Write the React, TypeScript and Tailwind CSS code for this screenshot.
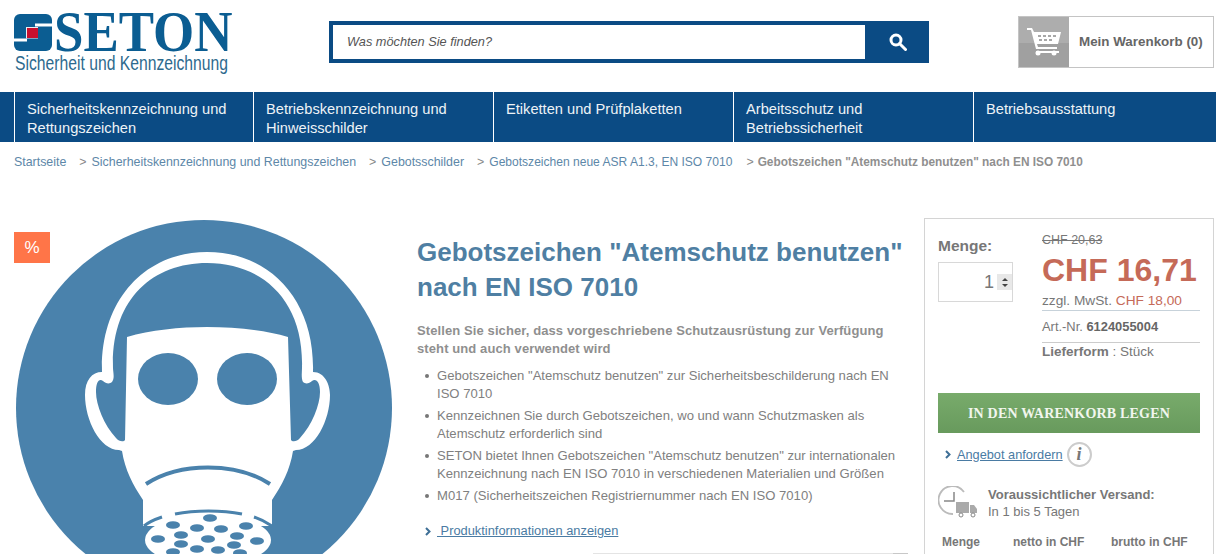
const Arial = "font-['Liberation_Sans',Arial,sans-serif]";

function Mask() {
  const c = "#4a82ac";
  const dots = [
    [210, 518], [173, 525], [197, 528], [221, 529], [246, 526], [181, 535], [237, 536],
    [158, 539], [208, 539], [257, 541], [181, 544], [234, 545], [173, 552], [197, 549], [218, 550], [240, 553],
  ];
  return (
    <svg width="380" height="340" viewBox="14 214 380 340" className="block">
      <circle cx="204" cy="408" r="188" fill={c} />
      <path
        d="M102 372 C100 300 145 252 207 252 C270 252 315 300 313 372 C325 372 330 385 330 395 C330 420 315 450 296 450 L293 451 C290 470 282 485 272 500 L272 526 L143 526 L143 500 C133 485 125 470 122 451 L119 450 C100 450 85 420 85 395 C85 380 92 372 102 372 Z"
        fill="#fff"
      />
      <path
        d="M127 337 C150 330 180 327 207 327 C235 327 265 330 288 337 L291 440 C292 442 297 442 300 438 C312 425 320 405 320 392 C320 382 316 378 312 381 C309 384 305 384 303 382 C301 378 302 372 302 368 C304 300 262 263 207 263 C152 263 111 300 113 368 C113 372 115 378 112 382 C110 384 106 384 103 381 C99 378 96 382 96 392 C96 405 104 425 116 438 C119 442 124 442 125 440 Z"
        fill={c}
      />
      <ellipse cx="168" cy="379" rx="30" ry="26" fill={c} />
      <ellipse cx="247" cy="379" rx="30" ry="26" fill={c} />
      <path d="M146 484 C180 462 236 462 270 484" fill="none" stroke={c} strokeWidth="4" />
      <ellipse cx="208" cy="540" rx="63" ry="26" fill="#fff" />
      <path d="M175 514 C195 510 222 510 242 514" fill="none" stroke={c} strokeWidth="3" />
      <path d="M144 526 C150 521 156 519 162 517 M254 517 C260 519 266 522 272 526" fill="none" stroke={c} strokeWidth="3" />
      {dots.map(([x, y], i) => (
        <ellipse key={i} cx={x} cy={y} rx="7" ry="3.8" fill={c} />
      ))}
    </svg>
  );
}

function Logo() {
  return (
    <div className="ml-[14px] flex w-[219px] shrink-0 flex-col pt-[13px]">
      <div className="flex h-[38px] items-center">
        <svg width="38" height="37" viewBox="0 0 38 37" className="shrink-0">
          <rect x="0" y="0" width="38" height="37" rx="6" fill="#0b5d92" />
          <path d="M21 9.5 H38 V12.5 H21 Z M0 24.5 H13 V27.5 H0 Z" fill="#fff" />
          <rect x="12" y="13" width="12" height="11.5" fill="#e9eef2" />
          <rect x="13" y="14" width="11" height="10" fill="#c8102e" />
        </svg>
        <span className="ml-[2px] origin-left scale-x-[0.945] font-['Liberation_Serif',serif] text-[56px] leading-[38px] font-bold text-[#0b5d92]">
          SETON
        </span>
      </div>
      <div className="mt-[2px] ml-px origin-left scale-x-[0.785] font-['Liberation_Sans',sans-serif] text-[20px] leading-[20px] whitespace-nowrap text-[#2d6a8e]">
        Sicherheit und Kennzeichnung
      </div>
    </div>
  );
}

function Header() {
  return (
    <header className="flex h-[92px]">
      <Logo />
      <form className="mt-[21px] ml-[96px] flex h-[42px] w-[600px] shrink-0 border-[4px] border-[#0b4b84] bg-[#0b4b84]">
        <div className="flex h-full w-[532px] items-center bg-white pl-[14px] text-[12.75px] text-[#555] italic">
          Was möchten Sie finden?
        </div>
        <div className="flex flex-1 items-center justify-center pl-[6px]">
          <svg width="18" height="18" viewBox="0 0 18 18" fill="none" stroke="#fff" strokeWidth="3">
            <circle cx="7" cy="7" r="5" />
            <path d="M10.5 10.5 L16.5 16.5" strokeLinecap="round" />
          </svg>
        </div>
      </form>
      <div className="mt-[16px] ml-[89px] flex h-[52px] w-[196px] shrink-0 border border-[#c4c4c4] bg-white">
        <div className="flex w-[50px] items-center justify-center bg-[linear-gradient(#adadad_0%,#adadad_53%,#a0a0a0_53%,#a0a0a0_100%)]">
          <svg width="36" height="30" viewBox="0 0 36 30" fill="#fff">
            <path d="M1 1 H6 L8 5 H35 L32 17 H11 L12 20 H31 V22 H10 L5 3 H1 Z" />
            <circle cx="12" cy="26" r="2.5" />
            <circle cx="28" cy="26" r="2.5" />
            <path d="M10 24 H33 V26 H10 Z" />
            <path d="M12 8 H15 V10 H12 Z M17 8 H20 V10 H17 Z M22 8 H25 V10 H22 Z M27 8 H30 V10 H27 Z M13 12 H16 V14 H13 Z M18 12 H21 V14 H18 Z M23 12 H26 V14 H23 Z" fill="#a8a8a8" />
          </svg>
        </div>
        <div className="flex flex-1 items-center pl-[10px] text-[13.4px] font-bold whitespace-nowrap text-[#666]">
          Mein Warenkorb (0)
        </div>
      </div>
    </header>
  );
}

function Nav() {
  const items = [
    { lines: ["Sicherheitskennzeichnung und", "Rettungszeichen"], w: "w-[239px]" },
    { lines: ["Betriebskennzeichnung und", "Hinweisschilder"], w: "w-[240px]" },
    { lines: ["Etiketten und Prüfplaketten"], w: "w-[240px]" },
    { lines: ["Arbeitsschutz und", "Betriebssicherheit"], w: "w-[240px]" },
    { lines: ["Betriebsausstattung"], w: "w-[240px]" },
  ];
  return (
    <nav className="flex h-[50px] bg-[#0b4b84] pl-[14px]">
      {items.map(({ lines, w }, i) => (
        <div
          key={i}
          className={`h-full ${w} shrink-0 border-l border-white pt-[8px] pl-[12px] text-[14.65px] leading-[19px] text-[#eef3f7]`}
        >
          {lines.map((l) => (
            <div key={l} className="whitespace-nowrap">{l}</div>
          ))}
        </div>
      ))}
    </nav>
  );
}

function Breadcrumb() {
  return (
    <div className="flex h-[39px] items-center pt-px pl-[14px] text-[12.4px] whitespace-nowrap text-[#5d87a8]">
      <span>Startseite</span>
      <span className="ml-[13px]">
        <span className="mr-[5px] text-[#888]">&gt;</span>
        Sicherheitskennzeichnung und Rettungszeichen
      </span>
      <span className="ml-[13px]">
        <span className="mr-[5px] text-[#888]">&gt;</span>
        Gebotsschilder
      </span>
      <span className="ml-[13px]">
        <span className="mr-[5px] text-[#888]">&gt;</span>
        <span className="text-[12.05px]">Gebotszeichen neue ASR A1.3, EN ISO 7010</span>
      </span>
      <span className="ml-[14px]">
        <span className="mr-[4px] font-normal text-[#888]">&gt;</span>
        <span className="text-[11.85px] font-bold text-[#8f8f8f]">Gebotszeichen "Atemschutz benutzen" nach EN ISO 7010</span>
      </span>
    </div>
  );
}

function Chevron() {
  return (
    <svg width="6" height="9" viewBox="0 0 6 9" fill="none" stroke="#3e6f96" strokeWidth="2" className="shrink-0">
      <path d="M1 1 L4.5 4.5 L1 8" />
    </svg>
  );
}

function Details() {
  const bullets = [
    'Gebotszeichen "Atemschutz benutzen" zur Sicherheitsbeschilderung nach EN ISO 7010',
    "Kennzeichnen Sie durch Gebotszeichen, wo und wann Schutzmasken als Atemschutz erforderlich sind",
    'SETON bietet Ihnen Gebotszeichen "Atemschutz benutzen" zur internationalen Kennzeichnung nach EN ISO 7010 in verschiedenen Materialien und Größen',
    "M017 (Sicherheitszeichen Registriernummer nach EN ISO 7010)",
  ];
  return (
    <div className="ml-[23px] w-[507px] shrink-0 pt-[19px]">
      <h1 className="text-[26px] leading-[35px] font-bold text-[#4f7fa3]">
        Gebotszeichen "Atemschutz benutzen"
        <br />
        nach EN ISO 7010
      </h1>
      <p className="mt-[17px] w-[490px] text-[13px] leading-[18px] font-bold tracking-[0.1px] text-[#8f8f8f]">
        Stellen Sie sicher, dass vorgeschriebene Schutzausrüstung zur Verfügung steht und auch verwendet wird
      </p>
      <ul className="mt-[9px] w-[480px] pl-[20px] text-[13.1px] leading-[18px] text-[#808080]">
        {bullets.map((b) => (
          <li key={b} className="relative mb-[4px]">
            <span className="absolute top-[7px] left-[-12px] h-[4px] w-[4px] rounded-full bg-[#777]" />
            {b}
          </li>
        ))}
      </ul>
      <div className="mt-[16px] flex h-[20px] items-center pl-[8px] text-[12.85px] text-[#4a7ba3]">
        <Chevron />
        <span className="ml-[6px] underline">&nbsp;Produktinformationen anzeigen</span>
      </div>
      <div className="mt-[12px] ml-[176px] flex h-[2px] w-[315px] justify-end bg-[#e4e4e4]">
        <div className="h-full w-[15px] bg-[#c8c8c8]" />
      </div>
    </div>
  );
}

function Buy() {
  return (
    <aside className="mt-[2px] h-[400px] w-[290px] shrink-0 border border-[#d4d4d4] px-[13px] pt-[12px] text-[#777]">
      <div className="flex">
        <div className="w-[104px] shrink-0">
          <div className="mt-[5px] text-[15.5px] leading-[20px] font-bold text-[#777]">Menge:</div>
          <div className="mt-[6px] flex h-[40px] w-[75px] items-center justify-end border border-[#d8d8d8]">
            <span className="mr-[3px] text-[18px] leading-none text-[#777]">1</span>
            <div className="flex h-[16px] w-[15px] flex-col items-center justify-center gap-[3px] bg-[#e8e8e8]">
              <div className="h-0 w-0 border-x-[3px] border-b-[3px] border-x-transparent border-b-[#444]" />
              <div className="h-0 w-0 border-x-[3px] border-t-[3px] border-x-transparent border-t-[#444]" />
            </div>
          </div>
        </div>
        <div className="w-[158px]">
          <div className="mt-px text-[12.5px] leading-[16px] text-[#777] line-through">CHF 20,63</div>
          <div className="mt-[4px] text-[32px] leading-[36px] font-bold text-[#c56a58]">CHF 16,71</div>
          <div className="mt-[3px] flex h-[20px] items-start border-b border-[#c7d2da] pt-[2px] text-[13.7px] leading-[16px] whitespace-nowrap">
            zzgl. MwSt.&nbsp;<span className="text-[#c56a58]">CHF 18,00</span>
          </div>
          <div className="flex h-[32px] items-center border-b border-[#ccc] text-[12.9px]">
            Art.-Nr.&nbsp;<b className="text-[#666]">6124055004</b>
          </div>
          <div className="text-[13.5px] leading-[17px]">
            <b>Lieferform</b> : Stück
          </div>
        </div>
      </div>
      <div className="mt-[33px] flex h-[40px] items-center justify-center bg-[linear-gradient(#78ab6b,#689a5d)] font-['Liberation_Serif',serif] text-[14px] font-bold tracking-[0.2px] text-[#f1f6ee]">
        IN DEN WARENKORB LEGEN
      </div>
      <div className="mt-[9px] flex items-center pl-[7px]">
        <Chevron />
        <span className="ml-[6px] text-[12.75px] text-[#4a7ba3] underline">Angebot anfordern</span>
        <span className="ml-[4px] flex h-[25px] w-[25px] items-center justify-center rounded-full border-2 border-[#ccc] font-['Liberation_Serif',serif] text-[18px] font-bold text-[#777] italic">
          i
        </span>
      </div>
      <div className="mt-[19px] flex">
        <svg width="42" height="34" viewBox="0 0 42 34" className="shrink-0" fill="none">
          <path d="M26 6 A14 14 0 1 0 15 28" stroke="#bbb" strokeWidth="1.8" />
          <path d="M16 6 V15 H6" stroke="#888" strokeWidth="1.5" />
          <rect x="18" y="16" width="13" height="11" fill="#aaa" />
          <path d="M32 19 H36 L39 23 V27 H32 Z" fill="#aaa" />
          <circle cx="23" cy="29" r="2" fill="#fff" stroke="#888" />
          <circle cx="35" cy="29" r="2" fill="#fff" stroke="#888" />
        </svg>
        <div className="ml-[8px] text-[13px] leading-[17px]">
          <div className="font-bold">Voraussichtlicher Versand:</div>
          <div>In 1 bis 5 Tagen</div>
        </div>
      </div>
      <div className="mt-[13px] flex text-[12px] font-bold text-[#777]">
        <span className="ml-[4px] w-[71px]">Menge</span>
        <span className="w-[98px]">netto in CHF</span>
        <span>brutto in CHF</span>
      </div>
    </aside>
  );
}

export default function App() {
  return (
    <div className={`h-[554px] w-[1216px] overflow-hidden bg-white ${Arial}`}>
      <Header />
      <Nav />
      <Breadcrumb />
      <div className="mt-[35px] flex">
        <div className="relative -mt-[2px] ml-[14px] h-[340px] w-[380px] shrink-0">
          <Mask />
          <div className="absolute top-[18px] left-0 flex h-[31px] w-[36px] items-center justify-center bg-[#ff7548] text-[17px] text-[#fff]">
            %
          </div>
        </div>
        <Details />
        <Buy />
      </div>
    </div>
  );
}
